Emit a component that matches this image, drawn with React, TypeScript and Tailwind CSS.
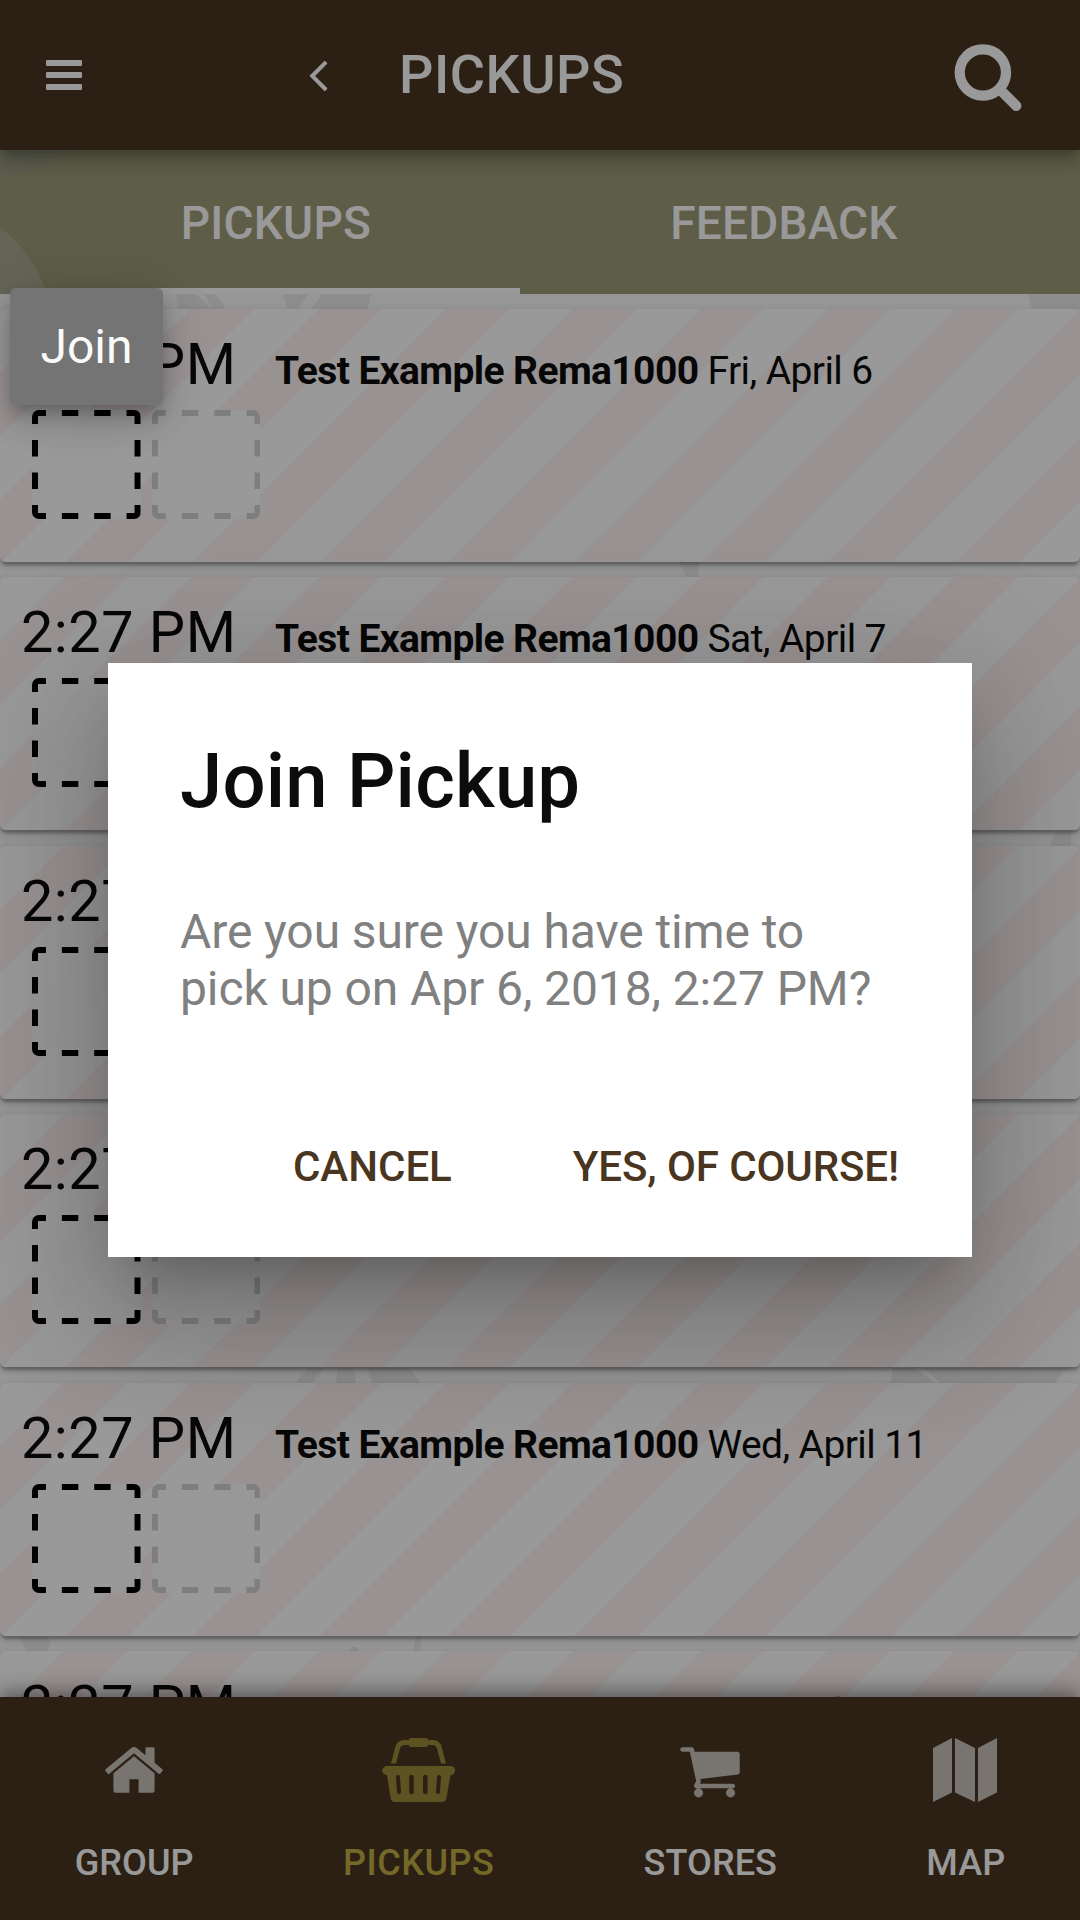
import React from "react";

const days = ["Fri, April 6", "Sat, April 7", "Sun, April 8", "Tue, April 10", "Wed, April 11", "Fri, April 13"];

function Glyph({ d, className }: { d: string; className: string }) {
  return (
    <svg viewBox="0 0 1792 1792" fill="currentColor" className={className}>
      <path d={d} />
    </svg>
  );
}

const SEARCH =
  "M1216 832q0-185-131.5-316.5t-316.5-131.5-316.5 131.5-131.5 316.5 131.5 316.5 316.5 131.5 316.5-131.5 131.5-316.5zm512 832q0 52-38 90t-90 38q-54 0-90-38l-343-342q-179 124-399 124-143 0-273.5-55.5t-225-150-150-225-55.5-273.5 55.5-273.5 150-225 225-150 273.5-55.5 273.5 55.5 225 150 150 225 55.5 273.5q0 220-124 399l343 343q37 37 37 90z";
const ANGLE =
  "M1203 544q0 13-10 23l-393 393 393 393q10 10 10 23t-10 23l-50 50q-10 10-23 10t-23-10l-466-466q-10-10-10-23t10-23l466-466q10-10 23-10t23 10l50 50q10 10 10 23z";
const HOME =
  "M1472 992v480q0 26-19 45t-45 19h-384v-384h-256v384h-384q-26 0-45-19t-19-45v-480q0-1 .5-3t.5-3l575-474 575 474q1 2 1 6zm223-69l-62 74q-8 9-21 11h-3q-13 0-21-7l-692-577-692 577q-12 8-24 7-13-2-21-11l-62-74q-8-10-7-23.5t11-21.5l719-599q32-26 76-26t76 26l244 204v-195q0-14 9-23t23-9h192q14 0 23 9t9 23v408l219 182q10 8 11 21.5t-7 23.5z";
const CART =
  "M704 1536q0 52-38 90t-90 38-90-38-38-90 38-90 90-38 90 38 38 90zm896 0q0 52-38 90t-90 38-90-38-38-90 38-90 90-38 90 38 38 90zm128-1088v512q0 24-16.5 42.5t-40.5 21.5l-1044 122q13 60 13 70 0 16-24 64h920q26 0 45 19t19 45-19 45-45 19h-1024q-26 0-45-19t-19-45q0-11 8-31.5t16-36 21.5-40 15.5-29.5l-177-823h-204q-26 0-45-19t-19-45 19-45 45-19h256q16 0 28.5 6.5t19.5 15.5 13 24.5 8 26 5.5 29.5 4.5 26h1201q26 0 45 19t19 45z";

function Basket() {
  return (
    <svg viewBox="0 0 73 64" fill="currentColor" className="h-16 w-[73px]">
      <path d="M9 25.500 13.500 8.500Q15.500 2 22 2H27Q27 0 29 0H44Q46 0 46 2H51Q57.500 2 59.500 8.500L64 25.500H59L55 10.500Q54 7 50 7H46Q46 9 44 9H29Q27 9 27 7H23Q19 7 18 10.500L14 25.500Z" />
      <path
        fillRule="evenodd"
        d="M4.500 28H68.500A4.500 4.500 0 0 1 68.500 37L64.500 60Q63.500 64 60 64H13Q9.500 64 8.500 60L5 37A4.500 4.500 0 0 1 4.500 28ZM14 39 15 54a2 2 0 0 0 4 0L18 39a2 2 0 0 0-4 0ZM27.200 39V54a2.300 2.300 0 0 0 4.600 0V39a2.300 2.300 0 0 0-4.600 0ZM41 39V54a2.300 2.300 0 0 0 4.600 0V39a2.300 2.300 0 0 0-4.600 0ZM55 39 54 54a2 2 0 0 0 4 0L59 39a2 2 0 0 0-4 0Z"
      />
    </svg>
  );
}

function MapIcon() {
  return (
    <svg viewBox="0 0 64 64" fill="currentColor" className="mr-[2px] size-16">
      <path d="M0 10 19 0V54.500L0 64ZM22 0 42 10V64L22 54.500ZM45 10 64 0V54.500L45 64Z" />
    </svg>
  );
}

function Slot({ className }: { className: string }) {
  return (
    <div className={"h-[109px] w-[108.5px] overflow-hidden rounded-[7px] bg-white/90 " + className}>
      <svg viewBox="0 0 109 109" preserveAspectRatio="none" className="size-full" stroke="currentColor" strokeWidth="6" fill="none">
        <path d="M0 3H109M0 106H109M3 0V109M106 0V109" strokeDasharray="14 16 16.500 16 16.500 16 14 0" />
      </svg>
    </div>
  );
}

function PickupCard({ day }: { day: string }) {
  return (
    <div className="h-[253px] shrink-0 rounded-[6px] bg-[repeating-linear-gradient(135deg,#fff_0,#fff_45px,#fff4f3_45px,#fff4f3_90px)] shadow-[0_3px_9px_rgba(0,0,0,0.2),0_3px_3px_rgba(0,0,0,0.14),0_6px_3px_-3px_rgba(0,0,0,0.12)]">
      <div className="flex h-[101px] items-baseline pt-[23px] pl-[21px] text-[#0c0c0c]">
        <div className="w-[254px] text-[57.6px] leading-[66px] tracking-[0.5px] whitespace-nowrap">2:27 PM</div>
        <div className="text-[39px] leading-[57px] tracking-[-0.6px] whitespace-nowrap">
          <b className="font-bold">Test Example Rema1000</b> {day}
        </div>
      </div>
      <div className="flex gap-[11px] pl-8">
        <Slot className="text-black" />
        <Slot className="text-[#d3d3d3]" />
      </div>
    </div>
  );
}

function NavTab({ label, active, children }: { label: string; active?: boolean; children: React.ReactNode }) {
  return (
    <div
      className={
        "flex flex-auto flex-col items-center " + (active ? "tracking-[0.5px] text-[#c0af44]" : "tracking-[0.1px] text-white")
      }
    >
      <div className="mt-[41px] flex h-16 items-center justify-center opacity-70">{children}</div>
      <div className="mt-[40px] text-[36px] leading-[42px] font-medium">{label}</div>
    </div>
  );
}

export default function App() {
  return (
    <div className="relative flex h-[1920px] w-[1080px] flex-col overflow-hidden bg-[#fafafa] font-[Roboto,sans-serif]">
      <header className="relative z-10 flex h-[150px] shrink-0 items-center bg-[#4a3520] text-white shadow-[0_6px_12px_-3px_rgba(0,0,0,0.2),0_12px_15px_rgba(0,0,0,0.14),0_3px_30px_rgba(0,0,0,0.12)]">
        <div className="ml-[46px] flex w-9 flex-col gap-[6px]">
          <div className="h-[6px] rounded-[1px] bg-white" />
          <div className="h-[6px] rounded-[1px] bg-white" />
          <div className="h-[6px] rounded-[1px] bg-white" />
        </div>
        <Glyph d={ANGLE} className="mb-[2px] ml-[209px] size-[54px]" />
        <h1 className="ml-[54px] flex-1 text-[54px] leading-[60px] font-medium tracking-[0.5px]">PICKUPS</h1>
        <Glyph d={SEARCH} className="mr-[56px] size-[72px]" />
      </header>

      <div className="relative flex h-[144px] shrink-0 overflow-hidden bg-[#9d9b78] px-8 text-[46px] font-medium tracking-[0.2px] text-white">
        <div className="absolute top-[51px] -left-[209px] size-[261px] rounded-full bg-[#a7a990]" />
        <div className="absolute -top-[125px] -left-[65px] size-[150px] rounded-full bg-[#999a82]" />
        <div className="relative flex w-[489.500px] items-center justify-center border-b-[6px] border-white pt-[9px]">PICKUPS</div>
        <div className="relative flex w-[530px] items-center justify-center pt-[3px]">FEEDBACK</div>
      </div>

      <main className="relative flex min-h-0 flex-1 flex-col gap-[15.4px] overflow-hidden pt-[15px]">
        <svg viewBox="0 0 1080 1403" className="absolute inset-0 h-[1403px] w-[1080px]" fill="#ebebeb">
          <path d="M176 0H196L212 15H178ZM205 0H215L226 15H212ZM283 0H308L298 15H287ZM322 0H371L368 15H311ZM1028 0H1080V15H1032Z" />
          <path d="M679 268H700L698 283H686ZM1056 537H1071V552H1050Z" />
          <path d="M308 1074H324L312 1089H296ZM338 1074H354L356 1089H336ZM367 1074H410L420 1089H372ZM893 1074H915L936 1089H890ZM924 1074H1066L1055 1089H940Z" />
          <path d="M18 1343H48Q54 1350 46 1357H28ZM350 1357Q354 1347 359 1357ZM416 1343H422L420 1357H413Z" />
        </svg>
        {days.map((d) => (
          <div key={d} className="relative">
            <PickupCard day={d} />
          </div>
        ))}
      </main>

      <footer className="relative z-10 flex h-[223px] shrink-0 bg-[#4a3520] shadow-[0_-6px_12px_-3px_rgba(0,0,0,0.2),0_-12px_15px_rgba(0,0,0,0.14),0_-3px_30px_rgba(0,0,0,0.12)]">
        <NavTab label="GROUP">
          <Glyph d={HOME} className="size-16" />
        </NavTab>
        <NavTab label="PICKUPS" active>
          <Basket />
        </NavTab>
        <NavTab label="STORES">
          <Glyph d={CART} className="size-16" />
        </NavTab>
        <NavTab label="MAP">
          <MapIcon />
        </NavTab>
      </footer>

      <div className="absolute inset-0 z-20 flex items-center justify-center bg-black/40">
        <div className="flex h-[594px] w-[864px] flex-col bg-white px-[72px] shadow-[0_33px_45px_-21px_rgba(0,0,0,0.2),0_72px_114px_9px_rgba(0,0,0,0.14),0_27px_138px_24px_rgba(0,0,0,0.12)]">
          <h2 className="mt-[72px] text-[76px] leading-[92px] font-medium tracking-[0.2px] text-[#0c0c0c]">Join Pickup</h2>
          <p className="mt-[76px] text-[48px] leading-[57px] tracking-[-0.1px] text-[#808080]">
            Are you sure you have time to
            <br />
            pick up on Apr 6, 2018, 2:27 PM?
          </p>
          <div className="mt-[126px] mr-px flex justify-end gap-[121px] text-[42px] leading-[48px] font-medium text-[#4a3520]">
            <button>CANCEL</button>
            <button className="tracking-[-0.1px]">YES, OF COURSE!</button>
          </div>
        </div>
      </div>

      <div className="absolute top-[288px] left-[10px] z-30 flex h-[117px] w-[153px] items-center justify-center rounded-[6px] bg-[#747474] text-[48px] text-[#fafafa] shadow-[0_9px_15px_-3px_rgba(0,0,0,0.2),0_18px_30px_rgba(0,0,0,0.14),0_3px_54px_rgba(0,0,0,0.12)]">
        Join
      </div>
    </div>
  );
}
